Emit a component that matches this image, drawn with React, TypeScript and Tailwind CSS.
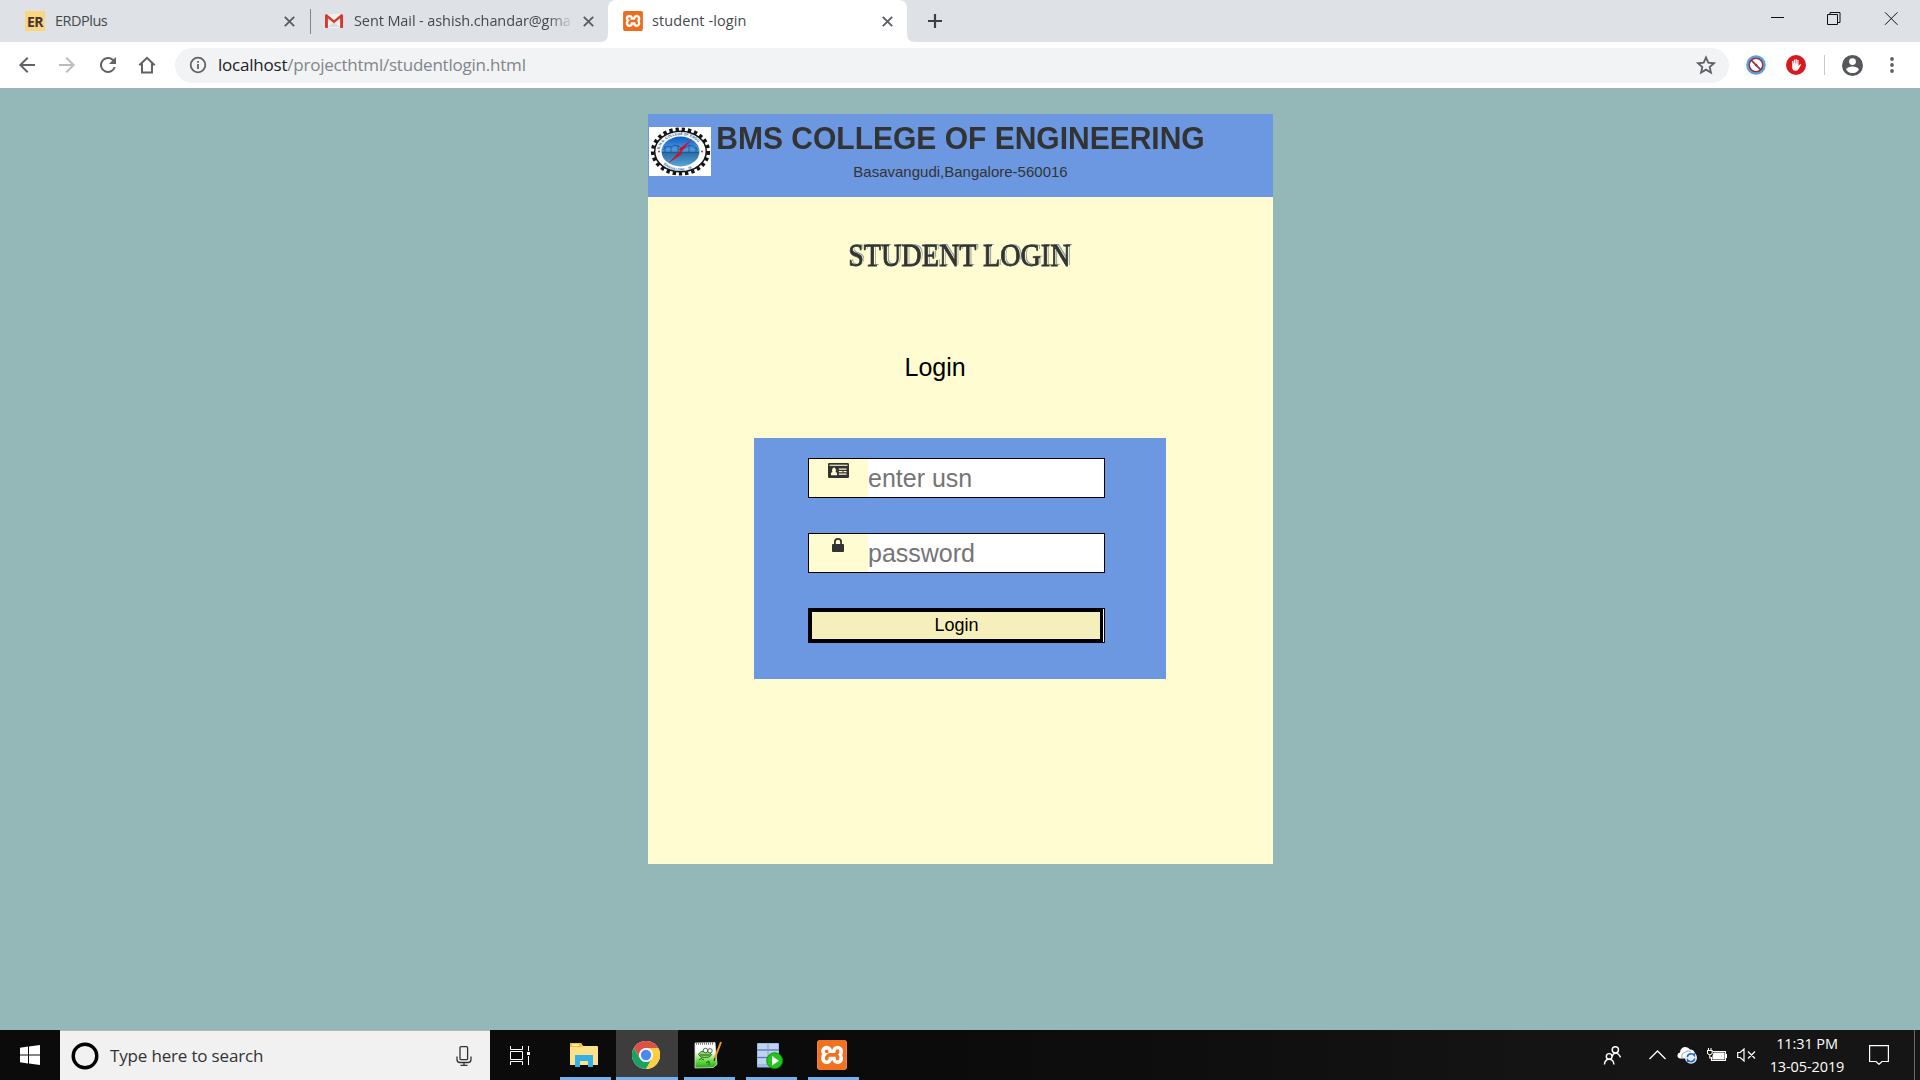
import type { ReactNode } from "react";
import { SiXampp } from "react-icons/si";

function CloseX({ className = "" }: { className?: string }) {
  return (
    <svg viewBox="0 0 11 11" className={`size-[11px] shrink-0 ${className}`} stroke="#5a5e63" strokeWidth="1.9">
      <path d="M0.8 0.8L10.2 10.2M10.2 0.8L0.8 10.2" />
    </svg>
  );
}

function Xampp({ box, glyph }: { box: string; glyph: string }) {
  return (
    <div className={`flex shrink-0 items-center justify-center bg-white ${box}`}>
      <SiXampp className={glyph} />
    </div>
  );
}

function TabStrip() {
  return (
    <div className="flex h-[42px] bg-[#dee1e6] font-['Open_Sans',sans-serif] text-[14.5px] text-[#45494e]">
      <div className="flex w-[310px] items-center pl-[25px]">
        <div className="flex size-5 items-center justify-center bg-[#f8d77f] text-[14px] font-bold tracking-[-0.5px] text-[#4a3038]">ER</div>
        <span className="ml-[10px] w-[229px] tracking-[-0.5px]">ERDPlus</span>
        <CloseX />
      </div>
      <div className="mt-[9px] h-[25px] w-px shrink-0 bg-[#80868b]" />
      <div className="flex w-[297px] items-center pl-[14px]">
        <svg viewBox="0 0 18 14" className="h-[14px] w-[18px] shrink-0">
          <path d="M1 0h16v14H1z" fill="#f1f1f1" />
          <path d="M3 13l6-5 6 5z" fill="#dcdcdc" />
          <path d="M0 1.5Q0 0 1.6 0L9 6.2 16.4 0Q18 0 18 1.5V14h-2.9V4.2L9 9.2 2.9 4.2V14H1Q0 14 0 13z" fill="#d8382c" />
        </svg>
        <span className="ml-[11px] w-[220px] whitespace-nowrap tracking-[-0.1px] [mask-image:linear-gradient(to_right,black_88%,transparent)]">
          Sent Mail - ashish.chandar@gma
        </span>
        <CloseX className="ml-[9px]" />
      </div>
      <div className="relative flex w-[299px] items-center rounded-t-lg bg-white pl-[15px]">
        <svg viewBox="0 0 8 8" className="absolute bottom-0 -left-2 size-2" fill="#fff"><path d="M8 0v8H0Q8 8 8 0z" /></svg>
        <svg viewBox="0 0 8 8" className="absolute -right-2 bottom-0 size-2" fill="#fff"><path d="M0 0v8h8Q0 8 0 0z" /></svg>
        <Xampp box="size-5 rounded-[3px]" glyph="size-5 text-[#ef6c1c]" />
        <span className="ml-[9px] w-[230px] tracking-[0.08px]">student -login</span>
        <CloseX />
      </div>
      <svg viewBox="0 0 16 16" className="mt-[13px] ml-[20px] size-4" stroke="#3c4043" strokeWidth="2.2">
        <path d="M8 1v14M1 8h14" />
      </svg>
      <svg viewBox="0 0 127 13" className="mt-3 ml-auto mr-[22px] h-[13px] w-[127px]" fill="none" stroke="#111" strokeWidth="1">
        <path d="M0 5.5h13" />
        <path d="M56.500 2.500h10v10h-10zM59 2.500v-2h10v10h-2" />
        <path d="M114 0.300l12.500 12.500M126.500 0.300L114 12.800" />
      </svg>
    </div>
  );
}

function Toolbar() {
  return (
    <div className="flex h-[47px] items-center border-b border-[#b0aaae] bg-white font-['Open_Sans',sans-serif]">
      <svg viewBox="0 0 24 24" className="ml-[15px] size-6" fill="#5f6368">
        <path d="M20 11H7.800l5.600-5.600L12 4l-8 8 8 8 1.400-1.400L7.800 13H20z" />
      </svg>
      <svg viewBox="0 0 24 24" className="ml-4 size-6 rotate-180" fill="#babcbe">
        <path d="M20 11H7.800l5.600-5.600L12 4l-8 8 8 8 1.400-1.400L7.800 13H20z" />
      </svg>
      <svg viewBox="0 0 24 24" className="ml-[17px] size-6" fill="#5f6368">
        <path d="M17.650 6.350A8 8 0 1 0 19.730 14h-2.080A6 6 0 1 1 12 6c1.660 0 3.140.690 4.220 1.780L13 11h7V4z" />
      </svg>
      <svg viewBox="0 0 20 20" className="ml-[17px] size-5" fill="none" stroke="#5f6368" strokeWidth="2">
        <path d="M2.300 10.300L10 2.800l7.700 7.500M5 8.500v9h10v-9" />
      </svg>
      <div className="ml-[18px] flex h-[35px] w-[1554px] items-center rounded-full bg-[#f1f3f4] pl-[14px]">
        <svg viewBox="0 0 18 18" className="size-[18px]" fill="none" stroke="#5f6368" strokeWidth="1.8">
          <circle cx="9" cy="9" r="7.300" />
          <path d="M9 8v5M9 5v1.800" />
        </svg>
        <span className="ml-[11px] text-[17px] tracking-[-0.22px] whitespace-nowrap text-[#80868b]">
          <span className="text-[#202124]">localhost</span>/projecthtml/studentlogin.html
        </span>
        <svg viewBox="0 0 24 24" className="mr-3 ml-auto size-[22px]" fill="none" stroke="#5f6368" strokeWidth="2">
          <path d="M12 3.800l2.500 5.700 6.200.600-4.700 4.100 1.400 6.100L12 17.100l-5.400 3.200L8 14.200 3.300 10.100l6.200-.600z" />
        </svg>
      </div>
      <svg viewBox="0 0 20 20" className="ml-[17px] size-5" fill="none">
        <circle cx="10" cy="10" r="8.800" fill="#fff" stroke="#4aa3ef" strokeWidth="2" />
        <circle cx="10" cy="10" r="6.900" stroke="#8a3a45" strokeWidth="1.800" />
        <path d="M5.200 5.200l9.600 9.600" stroke="#8a3a45" strokeWidth="1.800" />
        <circle cx="10" cy="10" r="1.300" fill="#8a3a45" />
      </svg>
      <svg viewBox="0 0 20 20" className="ml-5 size-5">
        <circle cx="10" cy="10" r="10" fill="#d81920" />
        <path d="M6.200 10V6.200q.6-.8 1.200 0V9M7.900 9V4.800q.6-.8 1.200 0V9M9.600 9V4.300q.6-.8 1.200 0V9M11.300 9.500V5.200q.6-.8 1.200 0V11l1.500-1.700q1-.4 1 .5L12.700 14q-.8 1.800-3 1.800-3.500 0-3.500-3.500V8.500h5z" fill="#fff" />
      </svg>
      <div className="ml-[18px] h-5 w-px bg-[#c8cacc]" />
      <svg viewBox="2 2 20 20" className="ml-[17px] size-[21px]" fill="#54585d">
        <path d="M12 2a10 10 0 1 0 0 20 10 10 0 0 0 0-20zm0 3a3.200 3.200 0 1 1 0 6.500A3.200 3.200 0 0 1 12 5zm0 14.200a7.200 7.200 0 0 1-6-3.220c.030-1.990 4-3.080 6-3.080s5.970 1.090 6 3.080a7.200 7.200 0 0 1-6 3.220z" />
      </svg>
      <svg viewBox="0 0 4 16" className="ml-[27px] h-4 w-1" fill="#5f6368">
        <circle cx="2" cy="2" r="1.900" />
        <circle cx="2" cy="8" r="1.900" />
        <circle cx="2" cy="14" r="1.900" />
      </svg>
    </div>
  );
}

function CollegeCrest() {
  return (
    <svg viewBox="0 0 62 49" className="mt-[13px] ml-px h-[49px] w-[62px] shrink-0">
      <defs>
        <linearGradient id="sea" x1="0" y1="0" x2="0" y2="1">
          <stop offset="0" stopColor="#0d5cc4" />
          <stop offset="0.45" stopColor="#4b9be6" />
          <stop offset="0.55" stopColor="#2a6fa8" />
          <stop offset="1" stopColor="#5aa5dc" />
        </linearGradient>
        <path id="crestTop" d="M10.500 24.500a21 16.500 0 0 1 42 0" />
        <path id="crestBottom" d="M9.500 25.500a22 18.500 0 0 0 44 0" />
      </defs>
      <rect width="62" height="49" fill="#fff" />
      <ellipse cx="31.500" cy="24.500" rx="27.500" ry="22" fill="none" stroke="#151515" strokeWidth="4.200" strokeDasharray="3.300 2.900" />
      <ellipse cx="31.500" cy="24.500" rx="25.800" ry="20.300" fill="#fff" stroke="#151515" strokeWidth="1.500" />
      <ellipse cx="31.500" cy="24.500" rx="19" ry="15" fill="url(#sea)" />
      <path d="M13 25.500h37M16 19v6M22 20v5M29 18v7M40 18v7M47 20v5M14 23q4-5 8-3 4-3 7-1 6 5 11-1 4 0 9 5" stroke="#24507f" strokeWidth="0.800" fill="none" />
      <path d="M43 12L29 23l2.500.500L19 36.500 33.500 26.500l-2-.500z" fill="#d6101c" />
      <text fontSize="3.600" fontWeight="700" fill="#1d5fae" fontFamily="Liberation Sans"><textPath href="#crestTop" startOffset="2">B.M.S. COLLEGE OF ENGG</textPath></text>
      <text fontSize="3.600" fontWeight="700" fill="#2d74b8" fontFamily="Liberation Sans"><textPath href="#crestBottom" startOffset="13">BANGALORE - 19</textPath></text>
      <circle cx="10" cy="24.500" r="1" fill="#e02030" />
      <circle cx="53" cy="24.500" r="1" fill="#e02030" />
    </svg>
  );
}

function Field({ icon, placeholder, type }: { icon: ReactNode; placeholder: string; type: string }) {
  return (
    <div className="flex h-10 w-[297px] border border-black bg-white">
      <div className="flex w-[59px] shrink-0 justify-center bg-[#fffcd1] pt-1">{icon}</div>
      <input
        type={type}
        placeholder={placeholder}
        className="w-[236px] bg-white text-[25px] leading-[38px] outline-none placeholder:text-[#757575]"
      />
    </div>
  );
}

function LoginPage() {
  return (
    <main className="flex h-[941px] justify-center bg-[#94b8b8] pt-[25px] pl-px font-['Liberation_Sans',Arial,sans-serif]">
      <div className="h-[750px] w-[625px] bg-[#fffcd1]">
        <header className="flex h-[83px] bg-[#6b98e0] text-[#333]">
          <CollegeCrest />
          <div className="flex w-[499px] flex-col items-center">
            <h1 className="mt-[7px] scale-y-[1.07] text-[30px] leading-[34px] font-bold whitespace-nowrap">BMS COLLEGE OF ENGINEERING</h1>
            <p className="mt-2 text-[15px] leading-[17px]">Basavangudi,Bangalore-560016</p>
          </div>
        </header>
        <h2 className="mt-[40px] flex justify-center pr-[2px] font-['Liberation_Serif',serif] text-[32px] leading-[37px] text-[#333]">
          <span className="scale-x-[0.88] whitespace-nowrap [-webkit-text-stroke:0.8px_#333] [text-shadow:1.5px_-0.5px_0px_#fffcd1,2.500px_-1px_0px_#8fa3a0]">STUDENT LOGIN</span>
        </h2>
        <p className="mt-[79px] ml-[256.5px] text-[25px] leading-[28px] text-black">Login</p>
        <form className="mt-[57px] ml-[106px] flex h-[241px] w-[412px] flex-col bg-[#6b98e0] pt-5 pl-[54px]">
          <Field
            type="text"
            placeholder="enter usn"
            icon={
              <svg viewBox="0 0 21 15" className="h-[15px] w-[21px]">
                <rect width="21" height="15" rx="1.200" fill="#333" />
                <path d="M1.500 1.700h18v1.100h-18z" fill="#fffcd1" />
                <path d="M3 12.200V10.500q0-1.200 1.500-1.500A2 2.600 0 1 1 7.500 9Q9 9.300 9 10.500v1.700zM10.800 5.500h7.700v1.200h-7.700zM10.800 8h3.700v1.200h-3.700zM15.500 8h3v1.200h-3zM10.800 10.500h7.700v1.200h-7.700z" fill="#fffcd1" />
              </svg>
            }
          />
          <div className="h-[35px]" />
          <Field
            type="password"
            placeholder="password"
            icon={
              <svg viewBox="0 0 12 14" className="mr-px h-[14px] w-3">
                <rect y="6" width="12" height="8" rx="0.800" fill="#333" />
                <path d="M2.900 6.500V4a3.100 3.100 0 0 1 6.200 0v2.500" fill="none" stroke="#333" strokeWidth="1.800" />
              </svg>
            }
          />
          <div className="mt-[35px] flex h-[35px] w-[297px] border border-black bg-[#fffcd1]">
            <button type="button" className="w-[294px] border-[3px] border-black bg-[#f5f0bb] pl-px text-[18px] leading-[27px] text-black">
              Login
            </button>
          </div>
        </form>
      </div>
    </main>
  );
}

function AppSlot({ children, active = false }: { children: ReactNode; active?: boolean }) {
  return (
    <div className={`flex h-[50px] w-[62px] flex-col items-center ${active ? "bg-[#3d3d3d]" : ""}`}>
      <div className="flex h-[47px] items-center justify-center pt-[3px] pr-[2px]">{children}</div>
      <div className={`h-[3px] bg-[#76b3ee] ${active ? "w-[62px]" : "w-[51px]"}`} />
    </div>
  );
}

function Taskbar() {
  return (
    <footer className="flex h-[50px] bg-linear-to-r from-[#0b0b0b] from-50% to-[#151515] to-85% font-['Open_Sans',sans-serif]">
      <div className="flex w-[60px] items-center justify-center">
        <svg viewBox="0 0 20 20" className="size-5" fill="#fff">
          <path d="M0 2.800L8 1.600V9.500H0zM9 1.450L20 0V9.500H9zM0 10.500h8v8L0 17.300zM9 10.500h11V20L9 18.600z" />
        </svg>
      </div>
      <div className="flex w-[430px] items-center border-t border-[#b5b5b5] bg-[#f1f1f1] pl-[11px]">
        <svg viewBox="0 0 28 28" className="size-7" fill="none" stroke="#000" strokeWidth="3.400">
          <circle cx="14" cy="14" r="11.800" />
        </svg>
        <span className="ml-[11px] text-[17px] tracking-[-0.17px] whitespace-nowrap text-[#333]">Type here to search</span>
        <svg viewBox="0 0 16 20" className="mr-[18px] ml-auto h-5 w-4" fill="none" stroke="#333" strokeWidth="1.300">
          <rect x="4" y="0.700" width="7.600" height="13" rx="1" />
          <path d="M1 10.500v3q0 3 3 3h8q3 0 3-3v-3M8 16.500v2.700M4.500 19.300h7" />
        </svg>
      </div>
      <div className="flex w-[64px] items-center pl-5">
        <svg viewBox="0 0 21 19" className="h-[19px] w-[21px]" fill="none" stroke="#fff" strokeWidth="1">
          <path d="M.5 0v3.500h12V0M.5 5.500h12v8H.5zM.5 19v-3.500h12V19M18.500 0v5M18.500 10v9" />
          <path d="M17 6h3v3h-3z" fill="#fff" stroke="none" />
        </svg>
      </div>
      <AppSlot>
        <svg viewBox="0 0 28 24" className="h-6 w-7">
          <path d="M0 1q0-1 1-1h10l2 3h14q1 0 1 1v18H0z" fill="#fde08a" />
          <path d="M0 1q0-1 1-1h10l2 3-1.500 1H0z" fill="#f3bf2c" />
          <path d="M2 1.500h7v1.300H2z" fill="#fff" />
          <path d="M5 12h18v12h-5v-6h-8v6H5z" fill="#35b0e6" />
        </svg>
      </AppSlot>
      <AppSlot active>
        <svg viewBox="0 0 48 48" className="size-7">
          <circle cx="24" cy="24" r="24" fill="#fff" />
          <path d="M24 12h20.800A24 24 0 0 0 3.200 12l10.400 18A12 12 0 0 1 24 12z" fill="#dd5144" />
          <path d="M13.600 30L3.200 12A24 24 0 0 0 24 48l10.400-18A12 12 0 0 1 13.600 30z" fill="#1ba261" />
          <path d="M34.400 30L24 48A24 24 0 0 0 44.800 12H24a12 12 0 0 1 10.400 18z" fill="#ffcd42" />
          <circle cx="24" cy="24" r="11.500" fill="#f3f3f3" />
          <circle cx="24" cy="24" r="8.800" fill="#4a8af4" />
        </svg>
      </AppSlot>
      <AppSlot>
        <svg viewBox="0 0 28 28" className="mr-px size-7">
          <defs>
            <linearGradient id="page" x1="0" y1="0" x2="0" y2="1">
              <stop offset="0.350" stopColor="#fff" />
              <stop offset="0.750" stopColor="#5ed93a" />
              <stop offset="1" stopColor="#22a516" />
            </linearGradient>
          </defs>
          <path d="M1 2l20-.5 2 22-4 3L1 27z" fill="url(#page)" stroke="#ddd" strokeWidth=".8" />
          <path d="M2 2.500h18" stroke="#777" strokeWidth="2.500" strokeDasharray="1 1" />
          <path d="M4.500 13.500q2-4 7-3.500 5 0 6 4-2 3-7 2.500-4 .5-6-3z" fill="#8fdb5a" stroke="#26601a" strokeWidth=".9" />
          <circle cx="11.500" cy="9.500" r="2.300" fill="#e9f7dc" stroke="#345" strokeWidth=".8" />
          <circle cx="16" cy="9.800" r="2.200" fill="#e9f7dc" stroke="#345" strokeWidth=".8" />
          <path d="M5 19q2-3 5 0M12 22l3-2v4M6 14h10" stroke="#1c5a18" fill="none" strokeWidth="1" />
          <path d="M27 1l-6.500 17" stroke="#e99a1c" strokeWidth="2" />
          <path d="M21 17l-1 3" stroke="#4b2b10" strokeWidth="1.200" />
        </svg>
      </AppSlot>
      <AppSlot>
        <svg viewBox="0 0 26 27" className="h-[27px] w-[26px]">
          <rect width="22" height="24.500" y="1" rx="1" fill="#9dbae2" />
          <path d="M1 2h9v5H1zM1 9h9v5.500H1zM1 16.500h9V22H1zM12 2h9v5h-9zM12 9h9v5.500h-9zM12 16.500h9V22h-9z" fill="#bfd3ee" />
          <path d="M0 8h22M0 15.500h22" stroke="#4f78b8" strokeWidth="1" />
          <circle cx="17.700" cy="18.700" r="8" fill="#1fc816" stroke="#0e7a0c" strokeWidth=".8" />
          <path d="M15 14l7 4.700-7 4.700z" fill="#fff" />
        </svg>
      </AppSlot>
      <AppSlot>
        <Xampp box="size-[30px] rounded-[4px]" glyph="size-[30px] text-[#f0711f]" />
      </AppSlot>
      <div className="ml-auto flex items-center pr-[5px] text-white">
        <svg viewBox="0 0 19 20" className="size-[19px]" fill="none" stroke="#fff" strokeWidth="1.500">
          <circle cx="12.500" cy="4" r="3.300" />
          <path d="M9 11q1-3.500 4-3.500t5 4.500" />
          <circle cx="6" cy="11" r="3" />
          <path d="M1 19.500q.5-5.500 5-5.500t5 5.500" />
        </svg>
        <svg viewBox="0 0 17 10" className="ml-[27px] h-[10px] w-[17px]" fill="none" stroke="#fff" strokeWidth="1.300">
          <path d="M.5 9l8-8 8 8" />
        </svg>
        <svg viewBox="0 0 21 18" className="ml-[11px] h-[18px] w-[21px]">
          <path d="M3 12.500Q0 11.500.5 9T3 6.500Q3.500 1 8.500 1q3 0 4.500 2.500 4 0 5 4v5z" fill="#fff" />
          <path d="M5 12q-1-5 3.500-6Q11 3.500 14 6" stroke="#999" strokeWidth=".9" fill="none" />
          <circle cx="14" cy="11.800" r="6" fill="#eaf1fb" />
          <path d="M10.200 11q.8-3.200 3.800-3.200 2 0 3.400 1.700V7.300M17.800 12.500q-.8 3.200-3.800 3.200-2 0-3.400-1.700v2.200" fill="none" stroke="#1c62d0" strokeWidth="1.400" />
        </svg>
        <svg viewBox="0 0 20 14" className="ml-[9px] h-[14px] w-5" fill="none" stroke="#fff" strokeWidth="1.100">
          <path d="M6 3.500h12.500v9H4.500V9" />
          <path d="M7 5h10v6H6V8z" fill="#fff" />
          <path d="M19.500 6v4" />
          <path d="M1.500 0v2M4 0v2M.5 2.500h4.700v2.700q-1 1.500-2.400 1.500T.5 5.200zM2.800 6.700V10h2" />
        </svg>
        <svg viewBox="0 0 19 14" className="ml-[10px] h-[14px] w-[19px]" fill="none" stroke="#fff" strokeWidth="1.200">
          <path d="M.7 4.500h2.500L7 1v12L3.200 9.500H.7zM11 3.500l7 7M18 3.500l-7 7" />
        </svg>
        <div className="ml-[12px] w-[80px] pr-[2px] text-center text-[14.500px] leading-[23px] tracking-[-0.1px] whitespace-nowrap">
          <div>11:31 PM</div>
          <div>13-05-2019</div>
        </div>
        <svg viewBox="0 0 20 20" className="ml-[21px] size-5" fill="none" stroke="#fff" strokeWidth="1.200">
          <path d="M.6.6h18.800v15.900h-6.400L10 19.300l-3-2.800H.6z" />
        </svg>
        <div className="ml-[25px] h-[50px] w-px bg-[#6a6a6a]" />
      </div>
    </footer>
  );
}

export default function App() {
  return (
    <div className="flex h-[1080px] w-[1920px] flex-col overflow-hidden">
      <TabStrip />
      <Toolbar />
      <LoginPage />
      <Taskbar />
    </div>
  );
}
